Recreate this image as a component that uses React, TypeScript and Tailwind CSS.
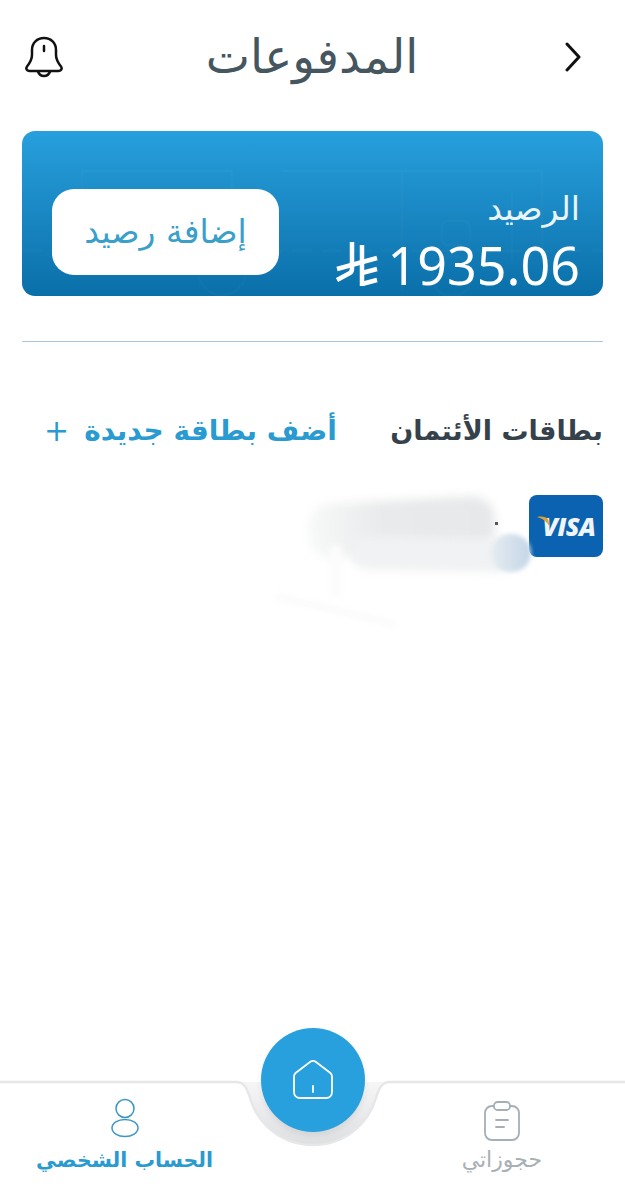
import React from "react";

const FONT = "font-['DejaVu_Sans',sans-serif]";

function Bell() {
  return (
    <svg width="40" height="42" viewBox="0 0 40 42" fill="none" stroke="#111" strokeWidth="2.5" strokeLinejoin="round" strokeLinecap="round">
      <path d="M20 2c-7 0-12 5-12 12v5c0 5-3 9-5 11.500-1.500 2-.5 4 2.500 4.500h29c3-.5 4-2.500 2.500-4.500-2-2.500-5-6.500-5-11.500v-5c0-7-5-12-12-12z" />
      <path d="M20 10v5" />
      <path d="M14 35.500c1 3 3 4.500 6 4.500s5-1.500 6-4.500" />
    </svg>
  );
}

function Chevron() {
  return (
    <svg width="16" height="30" viewBox="0 0 16 30" fill="none" stroke="#111" strokeWidth="3" strokeLinecap="round" strokeLinejoin="round">
      <path d="M2 2l12 13L2 28" />
    </svg>
  );
}

// Saudi riyal sign: two uprights with slanted bars
function RiyalSign() {
  return (
    <svg width="42" height="47" viewBox="0 0 42 47" fill="none" stroke="#fff" strokeWidth="4.500">
      <path d="M16 0v27c0 2-.8 3.500-3 4.500L1 38" />
      <path d="M26 3v41" />
      <path d="M1 27l40-11" />
      <path d="M26 31l15-4" />
      <path d="M26 42l15-4" />
    </svg>
  );
}

function CardBackdrop() {
  return (
    <svg className="absolute inset-0 h-full w-full rounded-[13px]" viewBox="0 0 581 165" fill="none" stroke="#ffffff" strokeOpacity="0.02" strokeWidth="3">
      <path d="M60 40h150v80M60 40v100M260 40h260v90M380 40v120M490 60v70" />
      <path d="M0 120h581" strokeDasharray="20 10" />
      <rect x="420" y="90" width="28" height="24" rx="6" />
      <circle cx="200" cy="140" r="24" />
      <circle cx="430" cy="145" r="20" />
    </svg>
  );
}

function VisaBadge() {
  return (
    <div className="relative flex h-[62px] w-[74px] shrink-0 items-center justify-center overflow-hidden rounded-[8px] bg-[#0a62b0]">
      <span dir="ltr" className="pl-[6px] font-['Open_Sans',sans-serif] text-[25px] font-extrabold italic leading-none tracking-[-0.5px] text-[#eef4f8]">
        VISA
      </span>
      <svg className="absolute left-[8px] top-[21px]" width="14" height="12" viewBox="0 0 14 12">
        <path d="M0 1c5-1 9 0 11 2l2 8C10 6 6 2.500 0 1z" fill="#dca233" />
      </svg>
    </div>
  );
}

// Smudged-out card number next to the badge
function Redaction() {
  return (
    <div className="pointer-events-none absolute inset-0">
      <div className="absolute right-[108px] top-[5px] h-[54px] w-[186px] -rotate-[3deg] rounded-[22px] bg-gradient-to-r from-[#f6f7f7] from-5% via-[#e8eaeb] via-40% to-[#e6e8e9] blur-[5px]" />
      <div className="absolute right-[90px] top-[42px] h-[34px] w-[162px] rotate-[1deg] rounded-[18px] bg-[#f0f2f3] blur-[4px]" />
      <div className="absolute right-[72px] top-[39px] h-[38px] w-[40px] rounded-full bg-gradient-to-r from-[#e6ecf0] to-[#c3d6e7] blur-[2px]" />
      <div className="absolute right-[261px] top-[50px] h-[52px] w-[12px] bg-[#fcfcfc] blur-[3px]" />
      <div className="absolute right-[205px] top-[112px] h-[7px] w-[124px] rotate-[13deg] bg-[#fbfbfb] blur-[3px]" />
      <div className="absolute right-[105px] top-[27px] h-[3px] w-[3px] bg-[#555]" />
    </div>
  );
}

function NavCurve() {
  return (
    <svg className="absolute left-0 top-[-4px] blur-[0.6px]" width="625" height="90" viewBox="0 0 625 90" fill="none">
      <defs>
        <linearGradient id="bowl" x1="0" y1="0" x2="0" y2="1">
          <stop offset="0" stopColor="#f6f6f7" />
          <stop offset="1" stopColor="#dedfe1" />
        </linearGradient>
      </defs>
      <path d="M236 4c8 0 11 6 14 16 8 27 32 47 63 47s55-20 63-47c3-10 6-16 14-16z" fill="url(#bowl)" />
      <path
        d="M0 4h236c8 0 11 6 14 16 8 27 32 47 63 47s55-20 63-47c3-10 6-16 14-16h235"
        stroke="#e6e7e9"
        strokeWidth="2.500"
      />
    </svg>
  );
}

function HomeIcon() {
  return (
    <svg width="42" height="42" viewBox="0 0 42 42" fill="none" stroke="#fff" strokeWidth="1.800" strokeLinejoin="round" strokeLinecap="round">
      <path d="M2 17.500c0-1.500.6-2.600 1.600-3.500L18 3c1.800-1.400 4.200-1.400 6 0l14.400 11c1 .9 1.600 2 1.600 3.500V33c0 3.500-2.500 6-6 6H8c-3.500 0-6-2.500-6-6z" />
      <path d="M21 27v6" />
    </svg>
  );
}

function PersonIcon() {
  return (
    <svg width="28" height="40" viewBox="0 0 28 40" fill="none" stroke="#3b97c6" strokeWidth="1.500">
      <ellipse cx="14" cy="10.500" rx="9" ry="9" />
      <ellipse cx="14" cy="30" rx="13" ry="8.500" />
    </svg>
  );
}

function ClipboardIcon() {
  return (
    <svg width="36" height="40" viewBox="0 0 36 40" fill="none" stroke="#a4afb7" strokeWidth="1.800" strokeLinecap="round" strokeLinejoin="round">
      <path d="M10 5H8c-4 0-7 3-7 7v20c0 4 3 7 7 7h20c4 0 7-3 7-7V12c0-4-3-7-7-7h-2" />
      <rect x="10" y="1" width="16" height="8" rx="3.500" />
      <path d="M12 19h12M12 26h8" />
    </svg>
  );
}

export default function App() {
  return (
    <div dir="rtl" className={`${FONT} relative flex min-h-[1200px] w-[625px] flex-col overflow-hidden bg-white`}>
      <header className="flex h-[116px] items-center justify-between pb-[2px] pl-[24px] pr-[44px]">
        <Chevron />
        <h1 className="pr-[5px] text-[47px] font-normal leading-[60px] text-[#45565f]">المدفوعات</h1>
        <Bell />
      </header>

      <main className="flex flex-col px-[22px] pt-[15px]">
        <section className="relative flex h-[165px] items-end justify-between rounded-[13px] bg-gradient-to-b from-[#27a0dd] to-[#0a6fa9] pb-[1px] pl-[30px] pr-[23px]">
          <CardBackdrop />
          <div className="relative flex flex-col items-start">
            <span className="mb-[4px] text-[33px] leading-[44px] text-[#e9f5fb]">الرصيد</span>
            <div className="flex items-center gap-[10px]">
              <span dir="ltr" className="font-['Noto_Sans',sans-serif] text-[52px] leading-[60px] text-white">1935.06</span>
              <RiyalSign />
            </div>
          </div>
          <button className="relative mb-[20px] flex h-[86px] w-[227px] items-center justify-center rounded-[22px] bg-white text-[33px] text-[#3a9fc9]">
            إضافة رصيد
          </button>
        </section>

        <hr className="mt-[45px] border-0 border-t border-[#a9c5da]" />

        <div className="mt-[67px] flex items-center justify-between">
          <h2 className="text-[27px] font-bold leading-[44px] text-[#36424b]">بطاقات الأئتمان</h2>
          <button className="flex items-center gap-[15px] pl-[22px] text-[28px] font-bold leading-[44px] text-[#2a9bd0]">
            <span>أضف بطاقة جديدة</span>
            <span className="text-[30px] font-normal">+</span>
          </button>
        </div>

        <div className="relative mt-[42px] flex">
          <VisaBadge />
          <Redaction />
        </div>
      </main>

      <nav className="relative mt-auto h-[118px]">
        <NavCurve />
        <button className="absolute left-[261px] top-[-54px] flex h-[104px] w-[104px] items-center justify-center rounded-full bg-[#28a0de] shadow-[0_3px_6px_rgba(0,0,0,0.08)]">
          <HomeIcon />
        </button>
        <div dir="ltr" className="flex h-full items-start justify-between pl-[36px] pr-[83px] pt-[16px]">
          <div dir="rtl" className="flex flex-col items-center">
            <PersonIcon />
            <span className="mt-[3px] text-[20.500px] font-bold leading-[38px] text-[#2a9bd0]">الحساب الشخصي</span>
          </div>
          <div dir="rtl" className="flex flex-col items-center">
            <div className="pt-[3px]">
              <ClipboardIcon />
            </div>
            <span className="text-[22px] leading-[38px] text-[#a8b0b5]">حجوزاتي</span>
          </div>
        </div>
      </nav>
    </div>
  );
}
